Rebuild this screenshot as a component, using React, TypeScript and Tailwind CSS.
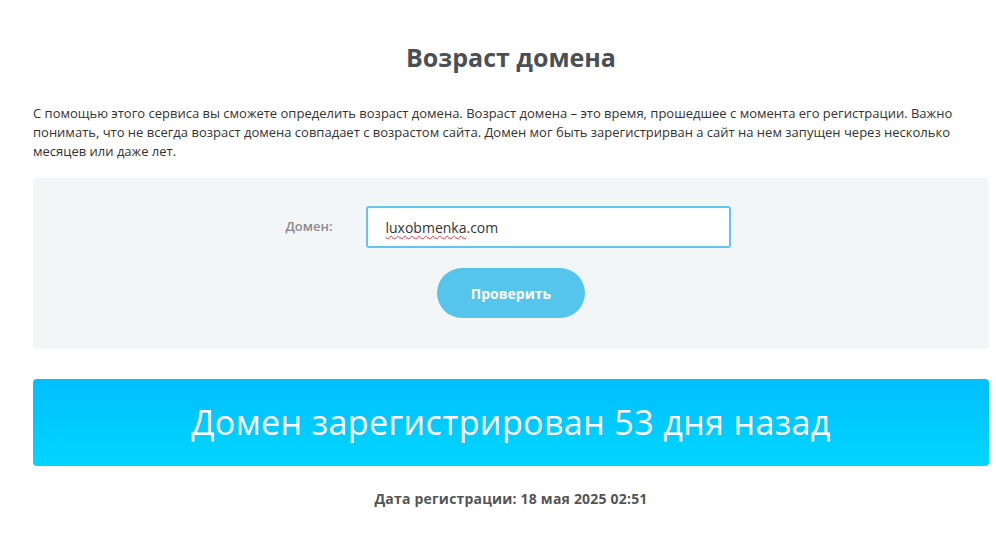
import React from 'react';

export default function App() {
    return (
        <div className="min-h-screen bg-white" style={{ fontFamily: '"Open Sans", "Noto Sans", sans-serif' }}>
            <div className="ml-[33px] w-[956px] pt-[40px]">
                <h1 className="text-center text-[25px] font-bold leading-[34px] text-[#4b4f56]">Возраст домена</h1>

                <p className="mt-[30px] text-[13px] leading-[19px] text-[#333]">
                    С помощью этого сервиса вы сможете определить возраст домена. Возраст домена – это время, прошедшее с момента его регистрации. Важно понимать, что не всегда возраст домена совпадает с возрастом сайта. Домен мог быть зарегистрирван а сайт на нем запущен через несколько месяцев или даже лет.
                </p>

                <div className="mt-[17px] flex h-[171px] flex-col items-center rounded bg-[#f3f6f7] pt-[28px]">
                    <div className="flex items-center">
                        <label className="w-[320px] pr-[33px] text-right text-[13px] font-semibold text-[#8a8a8a]">Домен:</label>
                        <div className="flex h-[42px] w-[365px] items-center rounded-[3px] border-2 border-[#62c6ea] bg-white pl-[18px] text-[14px] text-[#333]">
                            <span className="underline decoration-wavy decoration-red-500 decoration-1 underline-offset-2">luxobmenka</span>.com
                        </div>
                        <div className="w-[246px]" />
                    </div>
                    <button className="mt-[20px] h-[50px] w-[148px] rounded-full bg-[#56c5ec] text-[14px] font-bold text-white">
                        Проверить
                    </button>
                </div>

                <div className="mt-[30px] flex h-[87px] items-center justify-center rounded bg-gradient-to-b from-[#00bfff] to-[#00d6ff]">
                    <span className="text-[34px] font-normal tracking-[0.4px] text-white">Домен зарегистрирован 53 дня назад</span>
                </div>

                <p className="mt-[22px] text-center text-[14px] font-bold tracking-[0.2px] text-[#555]">
                    Дата регистрации: 18 мая 2025 02:51
                </p>
            </div>
        </div>
    );
}
